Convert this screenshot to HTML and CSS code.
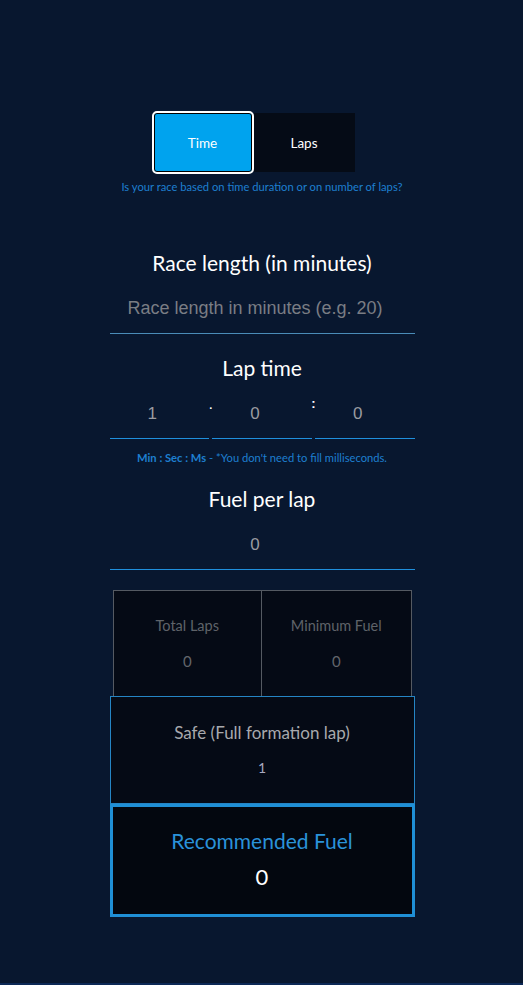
FILE: index.html
```html
<!DOCTYPE html>
<html lang="en">
<head>
<meta charset="utf-8">
<title>Fuel Calculator</title>
<link rel="stylesheet" href="styles.css">
</head>
<body>
<main class="page">
  <div class="toggle">
    <button class="toggle-btn active">Time</button>
    <button class="toggle-btn">Laps</button>
  </div>
  <p class="hint">Is your race based on time duration or on number of laps?</p>

  <h2 class="label first">Race length (in minutes)</h2>
  <div class="field"><span class="placeholder">Race length in minutes (e.g. 20)</span></div>

  <h2 class="label">Lap time</h2>
  <div class="lap-row">
    <div class="field small"><span class="value">1</span></div>
    <span class="sep dot">.</span>
    <div class="field small"><span class="value">0</span></div>
    <span class="sep colon">:</span>
    <div class="field small"><span class="value">0</span></div>
  </div>
  <p class="note"><b>Min : Sec : Ms</b> - *You don't need to fill milliseconds.</p>

  <h2 class="label fuel">Fuel per lap</h2>
  <div class="field"><span class="value">0</span></div>

  <div class="results">
    <div class="result-cell">
      <span class="result-label">Total Laps</span>
      <span class="result-value">0</span>
    </div>
    <div class="result-cell">
      <span class="result-label">Minimum Fuel</span>
      <span class="result-value">0</span>
    </div>
  </div>
  <div class="safe">
    <span class="safe-label">Safe (Full formation lap)</span>
    <span class="safe-value">1</span>
  </div>
  <div class="recommended">
    <span class="rec-label">Recommended Fuel</span>
    <span class="rec-value">0</span>
  </div>
</main>
<div class="bottom-bar"></div>
</body>
</html>
```

FILE: styles.css
```css
html, body {
  margin: 0;
  padding: 0;
  background: #08172f;
  height: 100%;
}

body {
  font-family: "Lato", "Open Sans", sans-serif;
  color: #fff;
  position: relative;
  min-height: 985px;
  padding-left: 1px;
  box-sizing: border-box;
}

.page {
  width: 305px;
  margin: 0 auto;
  padding-top: 111px;
  display: flex;
  flex-direction: column;
  align-items: stretch;
}

.toggle {
  display: flex;
  justify-content: center;
  align-items: center;
  margin-left: -18px;
}

.toggle-btn {
  font-family: "Lato", sans-serif;
  font-size: 13.5px;
  color: #fff;
  border: none;
  padding: 0;
  cursor: pointer;
  width: 101px;
  height: 59px;
  background: #050b16;
}

.toggle-btn.active {
  width: 102px;
  height: 63px;
  background: #00a3ee;
  border: 2px solid #fff;
  border-radius: 5px;
  box-shadow: 0 0 0 1px #000 inset;
}

.hint {
  margin: 6px 0 0;
  text-align: center;
  font-size: 11.2px;
  line-height: 14px;
  color: #1e7fd0;
  white-space: nowrap;
  margin-left: -20px;
  margin-right: -20px;
}

.label {
  margin: 20px 0 0;
  text-align: center;
  font-weight: 400;
  font-size: 21px;
  line-height: 28px;
  color: #fff;
}

.label.first {
  margin-top: 55px;
}

.label.fuel {
  margin-top: 20px;
}

.field {
  margin-top: 7px;
  height: 49px;
  border-bottom: 1px solid #3a8fc6;
  display: flex;
  align-items: center;
  justify-content: center;
  padding-right: 14px;
  font-family: "Liberation Sans", Arial, sans-serif;
}

.label.first + .field {
  border-bottom-color: #4a8cb8;
}

.placeholder {
  font-size: 18px;
  color: #7a7d84;
}

.value {
  font-size: 17px;
  color: #9a9ba0;
}

.lap-row {
  display: flex;
  margin-top: 7px;
}

.lap-row .field {
  flex: 1;
  margin-top: 0;
  border-bottom-color: #1f8fdc;
}

.sep {
  width: 3px;
  font-family: "Liberation Sans", Arial, sans-serif;
  font-weight: 700;
  color: #fff;
  display: flex;
  justify-content: center;
}

.sep.dot {
  font-size: 11px;
  line-height: 10px;
  padding-top: 11px;
}

.sep.colon {
  font-size: 13px;
  line-height: 12px;
  padding-top: 9px;
}

.note {
  margin: 12px 0 0;
  text-align: center;
  font-size: 11.2px;
  line-height: 14px;
  color: #1e7fd0;
  white-space: nowrap;
}

.note b {
  font-weight: 700;
}

.fuel + .field {
  border-bottom-color: #1f8fdc;
}

.results {
  margin: 20px 3px 0;
  display: grid;
  grid-template-columns: 1fr 1fr;
}

.result-cell {
  background: #050a15;
  border: 1px solid #555a62;
  display: flex;
  flex-direction: column;
  align-items: center;
  padding-top: 24px;
  box-sizing: border-box;
  height: 107px;
}

.result-cell + .result-cell {
  margin-left: -1px;
}

.result-label {
  font-size: 14.5px;
  line-height: 22px;
  color: #5f6369;
}

.result-value {
  margin-top: 14px;
  font-size: 15px;
  line-height: 20px;
  color: #62656b;
}

.safe {
  margin-top: -1px;
  height: 108px;
  box-sizing: border-box;
  border: 1px solid #2585c4;
  background: #050a15;
  display: flex;
  flex-direction: column;
  align-items: center;
  padding-top: 24px;
}

.safe-label {
  font-size: 17px;
  line-height: 24px;
  color: #a8a9ad;
}

.safe-value {
  margin-top: 13px;
  font-size: 14px;
  line-height: 20px;
  color: #a8a8c0;
}

.recommended {
  height: 113px;
  box-sizing: border-box;
  border: 3px solid #1f8fd6;
  background: #03070f;
  display: flex;
  flex-direction: column;
  align-items: center;
  padding-top: 20px;
}

.rec-label {
  font-size: 21px;
  line-height: 28px;
  color: #2a92da;
}

.rec-value {
  margin-top: 8px;
  font-size: 22px;
  line-height: 28px;
  color: #fff;
}

.bottom-bar {
  position: absolute;
  left: 0;
  right: 0;
  top: 983px;
  height: 2px;
  background: #0c2856;
}
```
